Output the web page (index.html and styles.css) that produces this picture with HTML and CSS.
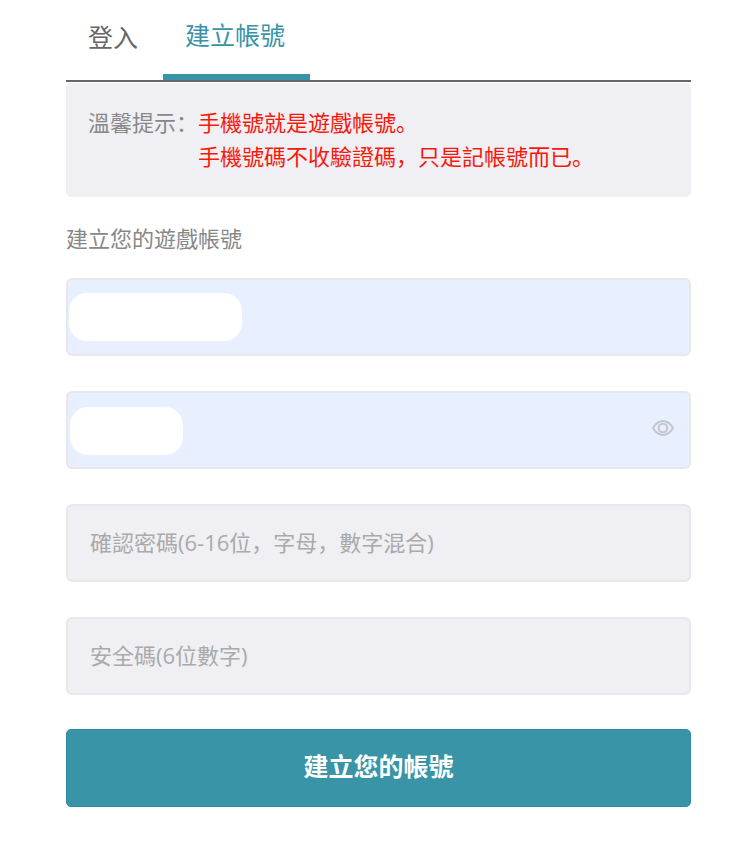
FILE: index.html
```html
<!DOCTYPE html>
<html lang="zh-CN">
<head>
  <meta charset="UTF-8">
  <meta name="viewport" content="width=device-width, initial-scale=1.0">
  <title>建立帳號</title>
  <link rel="stylesheet" href="styles.css">
</head>
<body>
  <div class="container">
    <nav class="tabs">
      <a class="tab" href="#login">登入</a>
      <a class="tab active" href="#register">建立帳號</a>
    </nav>

    <div class="notice">
      <span class="notice-title">溫馨提示：</span>
      <p class="notice-text">手機號就是遊戲帳號。<br>手機號碼不收驗證碼，只是記帳號而已。</p>
    </div>

    <form id="registerForm">
      <label class="form-title" for="phone">建立您的遊戲帳號</label>
      <div class="form-group filled">
        <input type="text" id="phone">
        <span class="mask mask-phone"></span>
      </div>
      <div class="form-group filled">
        <input type="password" id="password" aria-label="密碼">
        <span class="mask mask-password"></span>
        <button type="button" class="toggle" aria-label="顯示密碼">
          <svg viewBox="0 0 24 18" width="24" height="18" fill="none" stroke="#c4c6cd" stroke-width="2">
            <path d="M2 9C5 4 8 2 12 2s7 2 10 7c-3 5-6 7-10 7S5 14 2 9z" stroke-linejoin="round"/>
            <circle cx="12" cy="9" r="4.3"/>
          </svg>
        </button>
      </div>
      <div class="form-group">
        <input type="password" id="confirmPassword" aria-label="確認密碼" placeholder="確認密碼(6-16位，字母，數字混合)">
      </div>
      <div class="form-group">
        <input type="text" id="safeCode" aria-label="安全碼" placeholder="安全碼(6位數字)">
      </div>
      <button type="submit" class="submit">建立您的帳號</button>
    </form>
  </div>
</body>
</html>
```
FILE: styles.css
```css
* {
  box-sizing: border-box;
}

body {
  margin: 0;
  background-color: #fff;
  color: #888;
  font-family: "Open Sans", "Noto Sans CJK SC", sans-serif;
  font-size: 22px;
  line-height: 34px;
}

.container {
  padding: 0 41px 48px 66px;
}

.tabs {
  display: flex;
  height: 82px;
  border-bottom: 2px solid #666;
}

.tab {
  padding: 20px 25px 0 22px;
  color: #666;
  font-size: 25px;
  text-decoration: none;
}

.tab.active {
  padding-top: 18px;
  border-bottom: 6px solid #3894a6;
  color: #3894a6;
}

.notice {
  display: flex;
  margin-top: 1px;
  padding: 22px 22px 24px;
  border-radius: 5px;
  background-color: #efeff4;
}

.notice-title {
  flex: none;
}

.notice-text {
  margin: 0;
  color: #f8190a;
}

.form-title {
  display: block;
  margin: 24px 0 23px;
}

.form-group {
  position: relative;
  margin-bottom: 35px;
}

.form-group input {
  display: block;
  width: 100%;
  height: 78px;
  padding: 0 22px 2px;
  border: 2px solid #e8e8ea;
  border-radius: 6px;
  background-color: #efeff4;
  color: #333;
  font: inherit;
}

.form-group input::placeholder {
  color: #aaa;
  opacity: 1;
}

.form-group.filled input {
  background-color: #e8effe;
}

/* covers the saved account and password */
.mask {
  position: absolute;
  top: 15px;
  left: 3px;
  height: 48px;
  border-radius: 18px;
  background-color: #fff;
}

.mask-phone {
  width: 173px;
}

.mask-password {
  top: 16px;
  left: 4px;
  width: 113px;
}

.toggle {
  position: absolute;
  top: 28px;
  right: 16px;
  padding: 0;
  border: none;
  background: none;
  line-height: 0;
  cursor: pointer;
}

.submit {
  display: block;
  width: 100%;
  height: 78px;
  margin-top: -1px;
  padding: 0 0 4px;
  border: 1px solid #2b8b9d;
  border-radius: 5px;
  background-color: #3894a6;
  color: #fff;
  font: inherit;
  font-size: 25px;
  font-weight: bold;
  cursor: pointer;
}
```
